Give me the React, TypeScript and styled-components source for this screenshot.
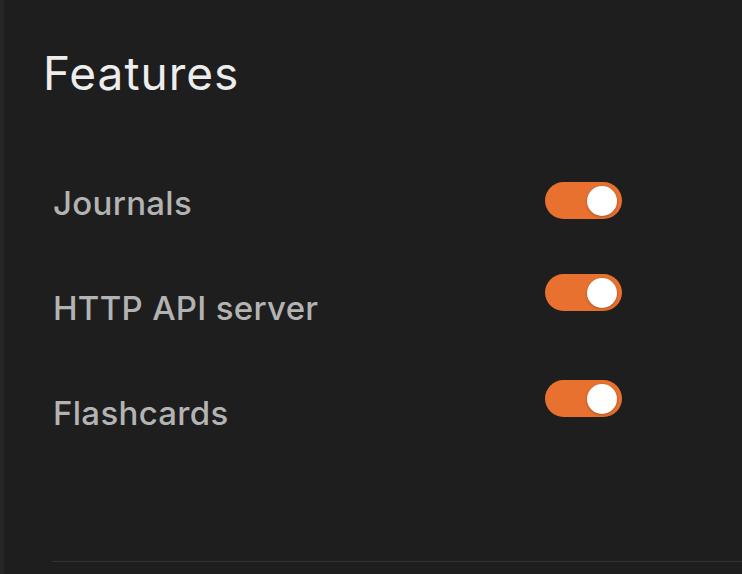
import React from "react";
import styled, { createGlobalStyle } from "styled-components";

const GlobalStyle = createGlobalStyle`
  html, body { margin: 0; padding: 0; background: #1e1e1e; }
  body { font-family: Inter, "Noto Sans", sans-serif; -webkit-font-smoothing: antialiased; }
`;

const Page = styled.div`
  display: flex;
  height: 574px;
  background: #1e1e1e;
  overflow: hidden;
`;

const EdgeStrip = styled.div`
  width: 4px;
  flex: none;
  background: #262626;
`;

const Content = styled.div`
  flex: 1;
  display: flex;
  flex-direction: column;
  padding: 47px 0 0 39px;
`;

const Heading = styled.h1`
  margin: 0;
  font-size: 46px;
  line-height: 53px;
  font-weight: 400;
  letter-spacing: 1px;
  color: #ededed;
`;

const List = styled.div`
  display: flex;
  flex-direction: column;
  padding-left: 10px;
  margin-top: 83px;
`;

const Row = styled.div`
  display: grid;
  grid-template-columns: 1fr auto;
  align-items: start;
  height: 105px;
  padding-right: 120px;
`;

const Label = styled.div`
  font-size: 33px;
  line-height: 40px;
  font-weight: 500;
  letter-spacing: 0.3px;
  color: #b3b3b3;
`;

const Toggle = styled.div<{ $shift: number; $on: boolean }>`
  position: relative;
  width: 77px;
  height: 37px;
  border-radius: 18.5px;
  background: ${(p) => (p.$on ? "#e87130" : "#444")};
  margin-top: ${(p) => p.$shift}px;
`;

const Knob = styled.div`
  position: absolute;
  top: 3.5px;
  right: 5px;
  width: 30px;
  height: 30px;
  border-radius: 50%;
  background: #ffffff;
  box-shadow: 0 1px 3px rgba(0, 0, 0, 0.25);
`;

const Divider = styled.div`
  margin-left: 9px;
  margin-top: auto;
  margin-bottom: 12px;
  height: 1px;
  background: #34342f;
`;

const items = [
  { label: "Journals", shift: -1 },
  { label: "HTTP API server", shift: -14 },
  { label: "Flashcards", shift: -13 },
];

export default function App() {
  return (
    <Page>
      <GlobalStyle />
      <EdgeStrip />
      <Content>
        <Heading>Features</Heading>
        <List>
          {items.map((it) => (
            <Row key={it.label}>
              <Label>{it.label}</Label>
              <Toggle $shift={it.shift} $on>
                <Knob />
              </Toggle>
            </Row>
          ))}
        </List>
        <Divider />
      </Content>
    </Page>
  );
}
